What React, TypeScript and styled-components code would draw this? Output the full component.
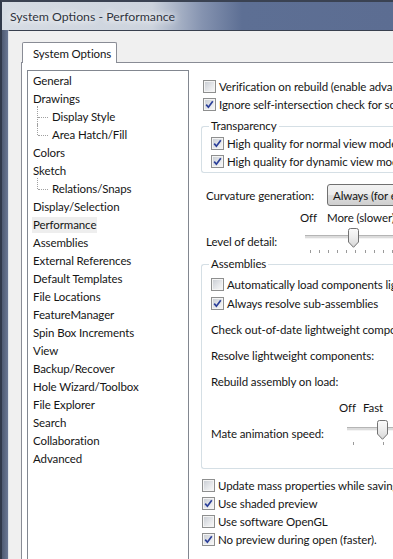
import React from 'react';
import styled, { createGlobalStyle } from 'styled-components';

const GlobalStyle = createGlobalStyle`
  html, body {
    margin: 0;
    padding: 0;
    overflow: hidden;
    background: #5c6e94;
  }
  body {
    font-family: Lato, 'Noto Sans', 'Liberation Sans', sans-serif;
    font-size: 11.5px;
    letter-spacing: -0.1px;
    color: #151515;
  }
`;

const Window = styled.div`
  width: 393px;
  height: 559px;
  box-sizing: border-box;
  overflow: hidden;
  display: flex;
  flex-direction: column;
  border-left: 2px solid #30394a;
  border-top: 2px solid #3a4252;
  background: #5a6a89;
`;

const TitleBar = styled.div`
  height: 28px;
  flex-shrink: 0;
  display: flex;
  align-items: center;
  padding-left: 8px;
  background: linear-gradient(90deg, #d6dce4 0px, #ccd3dd 150px, #8593b0 200px, #5d6f94 240px, #5c6d92 100%);
`;

const Title = styled.span`
  font-size: 12.3px;
  letter-spacing: 0;
  color: #2f3440;
  white-space: nowrap;
  text-shadow: 0 0 6px #ffffff, 0 0 10px #ffffff;
`;

const Frame = styled.div`
  flex: 1;
  display: flex;
  padding-left: 6px;
  min-height: 0;
  background: linear-gradient(90deg, #4e5a72 0px, #6a7894 6px);
`;

const Client = styled.div`
  flex: 1;
  display: flex;
  flex-direction: column;
  background: #f0f0f0;
  border-left: 1px solid #dfe4ea;
  border-top: 1px solid #39404f;
  min-width: 0;
`;

const TabStrip = styled.div`
  height: 31px;
  flex-shrink: 0;
  display: flex;
  align-items: flex-end;
  padding-left: 13px;
`;

const Tab = styled.div`
  height: 21px;
  box-sizing: border-box;
  margin-bottom: -1px;
  position: relative;
  z-index: 1;
  display: flex;
  align-items: center;
  padding: 0 5px 0 10px;
  background: #ffffff;
  border: 1px solid #898c95;
  border-bottom: none;
  border-radius: 2px 2px 0 0;
  white-space: nowrap;
`;

const TabPanel = styled.div`
  flex: 1;
  display: flex;
  align-items: flex-start;
  margin-left: 12px;
  padding: 7px 0 0 5px;
  background: #ffffff;
  border-top: 1px solid #898c95;
  border-left: 1px solid #898c95;
  min-height: 0;
`;

const Tree = styled.div`
  width: 162px;
  height: 520px;
  box-sizing: border-box;
  flex-shrink: 0;
  border: 1px solid #828790;
  padding-top: 1px;
  background: #ffffff;
`;

const TreeItem = styled.div<{ $child?: boolean; $last?: boolean }>`
  height: 18px;
  display: flex;
  align-items: center;
  position: relative;
  padding-left: ${p => (p.$child ? '23px' : '4px')};
  white-space: nowrap;

  ${p =>
    p.$child &&
    `
    &::before {
      content: '';
      position: absolute;
      left: 9px;
      top: -2px;
      height: ${p.$last ? '11px' : '20px'};
      border-left: 1px dotted #a0a0a0;
    }
    &::after {
      content: '';
      position: absolute;
      left: 10px;
      top: 9px;
      width: 10px;
      border-top: 1px dotted #a0a0a0;
    }
  `}
`;

const ItemLabel = styled.span<{ $selected?: boolean }>`
  padding: 0 1px;
  line-height: 16px;
  background: ${p => (p.$selected ? '#eeeeee' : 'transparent')};
`;

const Options = styled.div`
  flex: 1;
  margin-left: 11px;
  padding-top: 7px;
  min-width: 0;
  white-space: nowrap;
`;

const Row = styled.div<{ $h?: number; $indent?: number }>`
  height: ${p => p.$h ?? 18}px;
  display: flex;
  align-items: center;
  padding-left: ${p => p.$indent ?? 0}px;
  white-space: nowrap;
`;

const Group = styled.fieldset<{ $mt: number; $pb: number }>`
  margin: ${p => p.$mt}px 0 0 1px;
  padding: 0 0 ${p => p.$pb}px 9px;
  border: 1px solid #d5dfe5;
  border-right: none;
  border-radius: 3px 0 0 3px;
  min-width: 0;
`;

const Legend = styled.legend`
  padding: 0 2px;
  margin-left: -2px;
  line-height: 16px;
`;

const Box = styled.span`
  width: 13px;
  height: 13px;
  box-sizing: border-box;
  flex-shrink: 0;
  margin-right: 3px;
  border: 1px solid #8e8f8f;
  background: #f4f4f4;
  padding: 1px;
  display: flex;

  span {
    flex: 1;
    display: flex;
    background: linear-gradient(135deg, #cbcfd5 0%, #e6e8eb 60%, #f6f6f6 100%);
  }
`;

const Check = ({ checked, label }: { checked?: boolean; label: string }) => (
  <>
    <Box>
      <span>
        {checked && (
          <svg width="9" height="9" viewBox="0 0 9 9">
            <path d="M1.2 4.6 L3.4 7.2 L7.8 1.2" fill="none" stroke="#2b3f99" strokeWidth="1.7" />
          </svg>
        )}
      </span>
    </Box>
    {label}
  </>
);

const Combo = styled.div`
  height: 22px;
  box-sizing: border-box;
  width: 140px;
  flex-shrink: 0;
  display: flex;
  align-items: center;
  padding-left: 5px;
  border: 1px solid #707070;
  border-radius: 3px;
  background: linear-gradient(180deg, #f2f2f2 0%, #ebebeb 50%, #dddddd 51%, #cfcfcf 100%);
`;

const Label = styled.span<{ $w?: number }>`
  display: inline-block;
  width: ${p => (p.$w ? `${p.$w}px` : 'auto')};
  flex-shrink: 0;
`;

const SliderBox = styled.div<{ $w: number }>`
  position: relative;
  width: ${p => p.$w}px;
  height: 26px;
  flex-shrink: 0;
`;

const Track = styled.div`
  position: absolute;
  left: 0;
  right: 0;
  top: 7px;
  height: 2px;
  border-top: 1px solid #b5b5b5;
  border-bottom: 1px solid #f4f4f4;
  background: #dcdcdc;
`;

const Thumb = styled.svg`
  position: absolute;
  top: 0;
`;

const Tick = styled.div`
  position: absolute;
  top: 22px;
  width: 1px;
  height: 3px;
  background: #9a9a9a;
`;

const Slider = ({ width, thumb, ticks }: { width: number; thumb: number; ticks: number[] }) => (
  <SliderBox $w={width}>
    <Track />
    <Thumb width="11" height="20" viewBox="0 0 11 20" style={{ left: thumb }}>
      <defs>
        <linearGradient id="thumbFill" x1="0" y1="0" x2="0" y2="1">
          <stop offset="0" stopColor="#fbfbfb" />
          <stop offset="0.5" stopColor="#ececec" />
          <stop offset="1" stopColor="#d6d6d6" />
        </linearGradient>
      </defs>
      <path
        d="M2.5 0.5 H8.5 Q10.5 0.5 10.5 2.5 V14 L5.5 19.3 L0.5 14 V2.5 Q0.5 0.5 2.5 0.5 Z"
        fill="url(#thumbFill)"
        stroke="#727272"
      />
    </Thumb>
    {ticks.map(t => (
      <Tick key={t} style={{ left: t }} />
    ))}
  </SliderBox>
);

const tree: { label: string; child?: boolean; last?: boolean; selected?: boolean }[] = [
  { label: 'General' },
  { label: 'Drawings' },
  { label: 'Display Style', child: true },
  { label: 'Area Hatch/Fill', child: true, last: true },
  { label: 'Colors' },
  { label: 'Sketch' },
  { label: 'Relations/Snaps', child: true, last: true },
  { label: 'Display/Selection' },
  { label: 'Performance', selected: true },
  { label: 'Assemblies' },
  { label: 'External References' },
  { label: 'Default Templates' },
  { label: 'File Locations' },
  { label: 'FeatureManager' },
  { label: 'Spin Box Increments' },
  { label: 'View' },
  { label: 'Backup/Recover' },
  { label: 'Hole Wizard/Toolbox' },
  { label: 'File Explorer' },
  { label: 'Search' },
  { label: 'Collaboration' },
  { label: 'Advanced' },
];

const detailTicks = [5, 14, 23, 32, 41, 50, 60, 69, 78, 87];

const App = () => {
  return (
    <>
      <GlobalStyle />
      <Window>
        <TitleBar>
          <Title>System Options - Performance</Title>
        </TitleBar>
        <Frame>
          <Client>
            <TabStrip>
              <Tab>System Options</Tab>
            </TabStrip>
            <TabPanel>
              <Tree>
                {tree.map(item => (
                  <TreeItem key={item.label} $child={item.child} $last={item.last}>
                    <ItemLabel $selected={item.selected}>{item.label}</ItemLabel>
                  </TreeItem>
                ))}
              </Tree>
              <Options>
                <Row $indent={3}>
                  <Check label="Verification on rebuild (enable advanced body checking)" />
                </Row>
                <Row $indent={3}>
                  <Check checked label="Ignore self-intersection check for some sheet metal features" />
                </Row>
                <Group $mt={5} $pb={2}>
                  <Legend>Transparency</Legend>
                  <Row>
                    <Check checked label="High quality for normal view mode" />
                  </Row>
                  <Row>
                    <Check checked label="High quality for dynamic view mode" />
                  </Row>
                </Group>
                <Row $h={22} $indent={6} style={{ marginTop: 11 }}>
                  <Label $w={121}>Curvature generation:</Label>
                  <Combo>Always (for every model)</Combo>
                </Row>
                <Row $h={22} $indent={100}>
                  <Label $w={27}>Off</Label>
                  <Label>More (slower)</Label>
                </Row>
                <Row $h={26} $indent={6}>
                  <Label $w={99}>Level of detail:</Label>
                  <Slider width={110} thumb={43} ticks={detailTicks} />
                </Row>
                <Group $mt={2} $pb={22}>
                  <Legend>Assemblies</Legend>
                  <Row $h={19} style={{ marginTop: 3 }}>
                    <Check label="Automatically load components lightweight" />
                  </Row>
                  <Row $h={19}>
                    <Check checked label="Always resolve sub-assemblies" />
                  </Row>
                  <Row $h={26} style={{ marginTop: 3 }}>
                    <Label>Check out-of-date lightweight components:</Label>
                  </Row>
                  <Row $h={26}>
                    <Label>Resolve lightweight components:</Label>
                  </Row>
                  <Row $h={26}>
                    <Label>Rebuild assembly on load:</Label>
                  </Row>
                  <Row $h={26} $indent={128}>
                    <Label $w={24}>Off</Label>
                    <Label>Fast</Label>
                  </Row>
                  <Row $h={26} $indent={-1}>
                    <Label $w={136}>Mate animation speed:</Label>
                    <Slider width={60} thumb={30} ticks={[6, 36]} />
                  </Row>
                </Group>
                <Row $indent={2} style={{ marginTop: 7 }}>
                  <Check label="Update mass properties while saving document" />
                </Row>
                <Row $indent={2}>
                  <Check checked label="Use shaded preview" />
                </Row>
                <Row $indent={2}>
                  <Check label="Use software OpenGL" />
                </Row>
                <Row $indent={2}>
                  <Check checked label="No preview during open (faster)." />
                </Row>
              </Options>
            </TabPanel>
          </Client>
        </Frame>
      </Window>
    </>
  );
};

export default App;
